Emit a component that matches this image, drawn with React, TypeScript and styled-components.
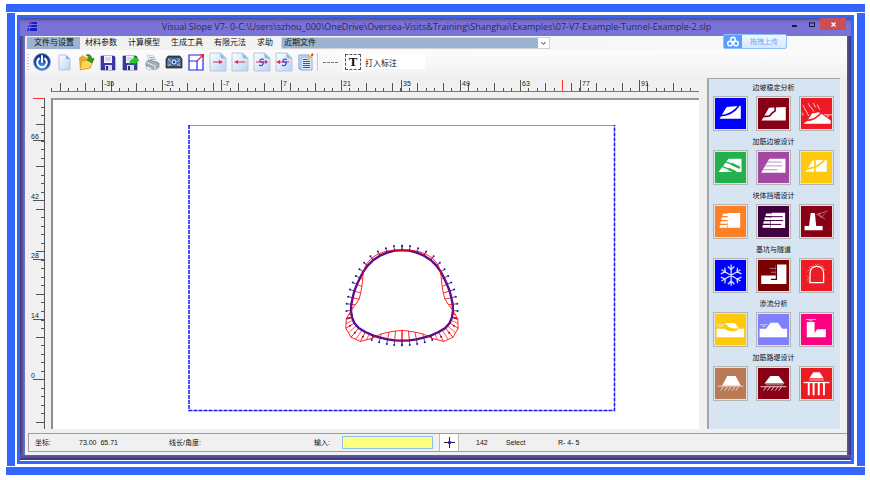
import React from "react";
import styled, { createGlobalStyle } from "styled-components";

const GlobalStyle = createGlobalStyle`
  * { box-sizing: border-box; }
  body { margin: 0; background: #fff; }
  button, input, select { font: inherit; margin: 0; padding: 0; border: 0; border-radius: 0; background: none; color: inherit; }
  svg { display: block; }
`;

const BLUE = "#3366ff";

const Page = styled.div`
  min-height: 100vh;
  display: flex;
  flex-direction: column;
  padding: 4px 5px 5px 6px;
  font-family: "Liberation Sans", "Noto Sans CJK SC", sans-serif;
  font-size: 8px;
  line-height: 12px;
  color: #111;
`;

const FrameBar = styled.div`
  height: 8px;
  background: ${BLUE};
`;

const FrameMiddle = styled.div`
  flex: 1;
  display: flex;
  margin: 1px 0 1px 1px;
  padding: 2px 3px 2px 2px;
  border: solid ${BLUE};
  border-width: 0 8px;
`;

const InnerFrame = styled.div`
  flex: 1;
  min-width: 0;
  display: flex;
  border: 3px solid ${BLUE};
  padding-bottom: 1px;
`;

const AppWindow = styled.main`
  position: relative;
  flex: 1;
  min-width: 0;
  display: flex;
  flex-direction: column;
  padding: 0 4px 5px 5px;
  background:
    linear-gradient(to top, #38356f, #625cb4) bottom / 100% 5px no-repeat,
    linear-gradient(to right, #3b3878, #7a74cc) left / 5px 100% no-repeat,
    linear-gradient(to left, #38356f, #625cb4) right / 5px 100% no-repeat;
`;

const TitleBar = styled.header`
  display: grid;
  grid-template-columns: 1fr auto 1fr;
  align-items: center;
  height: 18px;
  margin: 0 -4px 0 -5px;
  padding: 0 5px 0 7px;
  background: linear-gradient(to bottom, #4b4690, #7069c8 3px, #7a74d8 6px, #7973d6);
`;

const Title = styled.h1`
  margin: 0;
  font: 400 9px/16px "Open Sans", "Noto Sans", sans-serif;
  white-space: nowrap;
  color: #2c2a58;
`;

const WindowControls = styled.div`
  display: flex;
  align-self: start;
  justify-self: end;
`;

const WindowButton = styled.button<{ $close?: boolean }>`
  display: grid;
  place-items: center;
  width: ${(p) => (p.$close ? "26px" : "17px")};
  height: 12px;
  background: ${(p) => (p.$close ? "#c94f55" : "transparent")};
`;

const Client = styled.div`
  flex: 1;
  display: flex;
  flex-direction: column;
  padding-bottom: 3px;
  background: #f0f0f0;
`;

const MenuBar = styled.nav`
  display: flex;
  height: 14px;
  padding: 1px 0 1px 2px;
  background: linear-gradient(to right, #f0f0f0, #fafafa);
`;

const MenuItem = styled.button<{ $active?: boolean }>`
  height: 12px;
  padding: ${(p) => (p.$active ? "0 6px 0 7px" : "0 6px 0 5px")};
  background: ${(p) => (p.$active ? "#9ab3d0" : "transparent")};
  white-space: nowrap;
`;

const Combo = styled.label`
  position: relative;
  width: 269px;
  margin-left: 2px;
  border: 1px solid #d2d2d8;
  background: #fff;
`;

const ComboSelect = styled.select`
  appearance: none;
  display: block;
  width: 256px;
  height: 10px;
  padding: 0 2px;
  background: #9ab3d0;
  line-height: 10px;
`;

const ComboArrow = styled.svg`
  position: absolute;
  right: 3px;
  top: 3px;
  pointer-events: none;
`;

const Toolbar = styled.div`
  display: flex;
  align-items: center;
  height: 26px;
  padding: 0 0 2px 2px;
  background: linear-gradient(to bottom, #fcfcfc, #f2f2f2);
`;

const Grip = styled.span`
  width: 2px;
  height: 16px;
  margin-right: 2px;
  background: repeating-linear-gradient(to bottom, #c4c4c4 0 1px, transparent 1px 3px);
`;

const ToolButton = styled.button`
  display: grid;
  place-items: center;
  width: 22px;
  height: 22px;
`;

const Divider = styled.span`
  width: 1px;
  height: 18px;
  background: #c8c8cc;
`;

const DashButton = styled.button`
  width: 16px;
  height: 20px;
  margin: 0 4px 0 5px;
  background: repeating-linear-gradient(to right, #777 0 3px, transparent 3px 4px) center / 100% 1px no-repeat;
`;

const TextTool = styled.button`
  display: grid;
  place-items: center;
  width: 20px;
  height: 20px;
  background: #fff;
  font: 700 13px/14px "Liberation Serif", serif;

  span { width: 16px; height: 16px; border: 1px dashed #555; }
`;

const NoteInput = styled.input`
  width: 62px;
  height: 14px;
  padding-left: 2px;
  background: #fff;
  font-size: 8px;
`;

const Workspace = styled.div`
  flex: 1;
  display: flex;
  padding: 2px 7px 4px 0;
`;

const Drawing = styled.section`
  flex: 1;
  min-width: 0;
  display: grid;
  grid-template: 20px 1fr / 26px 1fr;
  margin-right: 8px;
`;

const Ruler = styled.svg`
  width: 100%;
  height: 100%;
  overflow: hidden;
  font: 7px "Liberation Sans", sans-serif;
  shape-rendering: crispEdges;
`;

const Corner = styled.div``;

const Canvas = styled.div`
  min-height: 0;
  border: solid #8e8e8e;
  border-width: 2px 0 0 2px;
  border-top-color: #9a9a9a;
  background: #fff;

  svg { width: 100%; height: 100%; }
`;

const Palette = styled.aside`
  width: 133px;
  border: solid #a3a6ab;
  border-width: 1px 0 0 2px;
  background: #d7e4f2;
`;

const Group = styled.section`
  display: grid;
  grid-template-columns: repeat(3, 35px);
  justify-content: space-between;
  padding: 0 6px 2px 4px;
`;

const GroupTitle = styled.h2`
  grid-column: 1 / -1;
  margin: 0;
  font-size: 7px;
  font-weight: 400;
  line-height: 17px;
  text-align: center;
`;

const PaletteButton = styled.button<{ $color: string }>`
  width: 35px;
  height: 35px;
  border: 1px solid #b4b4b4;
  padding: 1px;
  background: #e6e3e3;

  svg { width: 31px; height: 31px; background: ${(p) => p.$color}; }
`;

const StatusBar = styled.footer`
  display: grid;
  grid-template-columns: 44px 90px 145px 28px 91px 6px 20px 17px 30px 52px 1fr;
  align-items: center;
  height: 19px;
  margin-left: 3px;
  padding-left: 6px;
  border: 1px solid #9c9c9c;
  border-right: 0;
  font-size: 7px;
  white-space: nowrap;
`;

const CommandInput = styled.input`
  height: 13px;
  padding: 0 2px;
  border: 1px solid #8fc0ea;
  background: #ffff80;
  outline: none;
`;

const CrossButton = styled.button`
  grid-column: 7;
  display: grid;
  place-items: center;
  height: 17px;
  border: solid #bbb;
  border-width: 0 1px;
  background: #fff;
`;

const StatusCell = styled.span<{ $column?: number }>`
  grid-column: ${(p) => p.$column ?? "auto"};
`;

const Upload = styled.button`
  position: absolute;
  top: 16px;
  right: 64px;
  display: flex;
  align-items: center;
  width: 64px;
  height: 15px;
  border: 1px solid #8fbcff;
  border-radius: 2px;
  overflow: hidden;
  background: linear-gradient(to bottom, #f0f7ff, #d5e8ff);
  color: #74a8f8;
  font-size: 7px;

  svg { background: #5a9cff; }
  span { flex: 1; }
`;

const PageShape = () => (
  <>
    <path d="M2 1h11l5 5v13H2z" fill="url(#paper)" stroke="#b4c8e2" />
    <path d="M12 1l1 5 5 1z" fill="#8fb2dc" />
  </>
);

const Defs = () => (
  <defs>
    <linearGradient id="paper" x1="0" y1="0" x2="1" y2="1">
      <stop offset="0" stopColor="#fff" />
      <stop offset="1" stopColor="#b9d2f0" />
    </linearGradient>
    <radialGradient id="orb" cx=".5" cy=".8" r=".8">
      <stop offset="0" stopColor="#54a6ee" />
      <stop offset=".5" stopColor="#1b4fae" />
      <stop offset="1" stopColor="#0c2a74" />
    </radialGradient>
  </defs>
);

const Floppy = () => (
  <>
    <path d="M3 4h13l1 1v13H3z" fill="#3c3aa8" stroke="#2a2880" strokeWidth=".6" />
    <path d="M6 4h8v7H6z" fill="#f4f4ff" />
    <path d="M7 6h6M7 8h6" stroke="#b8b8d8" />
    <path d="M7 13h7v5H7z" fill="#dcdcec" />
    <path d="M8 14h2v4H8z" fill="#2a2880" />
  </>
);

const toolIcons: { name: string; art: React.ReactNode }[] = [
  {
    name: "电源",
    art: (
      <>
        <circle cx="10" cy="10" r="8.4" fill="url(#orb)" stroke="#6f8fc0" strokeWidth=".8" />
        <path d="M7 6.600a4.800 4.800 0 1 0 6 0M10 4v6" fill="none" stroke="#fff" strokeWidth="2" strokeLinecap="round" />
      </>
    ),
  },
  {
    name: "新建",
    art: (
      <>
        <path d="M5 3h7l4 4v11H5z" fill="url(#paper)" stroke="#b4c8e2" />
        <path d="M12 3v4h4z" fill="#86aee0" />
      </>
    ),
  },
  {
    name: "打开",
    art: (
      <>
        <path d="M3 6l4-3 2 2 7 1-1 10-11 2z" fill="#e9a92a" />
        <path d="M4 18l2-9 12-2-4 9z" fill="#ffd65c" stroke="#cf9420" strokeWidth=".7" />
        <path d="M10 3q5-2 6 4l2-1-2 5-5-3 2-1q0-3-3-4z" fill="#1fa51f" stroke="#12650f" strokeWidth=".5" />
      </>
    ),
  },
  { name: "保存", art: <Floppy /> },
  {
    name: "另存",
    art: (
      <>
        <Floppy />
        <path d="M9 13q1-6 5-6V4l5 4-5 5v-3q-3 0-5 3z" fill="#16d216" stroke="#0aa00a" strokeWidth=".5" />
      </>
    ),
  },
  {
    name: "打印",
    art: (
      <>
        <path d="M5 3l7 1 3 6-8-1z" fill="#fff" stroke="#bbb" strokeWidth=".7" />
        <path d="M7 5l5 1M8 7l5 1" stroke="#5b87c8" strokeWidth=".8" />
        <path d="M4 10l3-2 10 3v4l-4 3-9-4z" fill="#a4adbb" stroke="#68727f" strokeWidth=".6" />
        <path d="M4 10l9 4v4" fill="none" stroke="#e8edf4" />
        <path d="M5 14l6 3-3 1-4-2z" fill="#fff" stroke="#888" strokeWidth=".5" />
      </>
    ),
  },
  {
    name: "快照",
    art: (
      <>
        <path d="M4 4h12l2 3v9H2V7z" fill="#3e4650" stroke="#222" strokeWidth=".7" />
        <path d="M4 6h12l1 8H3z" fill="#5680b6" />
        <circle cx="10" cy="10" r="3.300" fill="#b8d4f0" stroke="#26466f" />
        <circle cx="10" cy="10" r="1.200" fill="#26466f" />
        <path d="M4 7l3 3M16 7l-3 3M4 14l3-2M16 14l-3-2" stroke="#d7e7f6" strokeWidth=".7" />
      </>
    ),
  },
  {
    name: "缩放",
    art: (
      <>
        <path d="M3 3h14v15H3zM3 9h8v9" fill="#fff" stroke="#2424e8" strokeWidth="1.200" />
        <path d="M11 9l5-5" stroke="#f02020" strokeWidth="1.200" />
        <path d="M14 2h4v4z" fill="#f02020" />
      </>
    ),
  },
  {
    name: "右移",
    art: (
      <>
        <PageShape />
        <path d="M5 10h8" stroke="#ec2448" />
        <path d="M11 8l4 2-4 2z" fill="#ec2448" />
      </>
    ),
  },
  {
    name: "左移",
    art: (
      <>
        <PageShape />
        <path d="M7 10h8" stroke="#ec2448" />
        <path d="M8 8l-4 2 4 2z" fill="#ec2448" />
      </>
    ),
  },
  {
    name: "步进",
    art: (
      <>
        <PageShape />
        <path d="M4 10h11" stroke="#ec2448" />
        <path d="M13 8l3 2-3 2z" fill="#ec2448" />
        <path d="M12 7.500q-4-1-4 1t2 1.500 1 2-4 1" fill="none" stroke="#3838e0" strokeWidth="1.200" />
      </>
    ),
  },
  {
    name: "步退",
    art: (
      <>
        <PageShape />
        <path d="M4 10h11" stroke="#ec2448" />
        <path d="M6 8l-4 2 4 2z" fill="#ec2448" />
        <path d="M13 7.500q-4-1-4 1t2 1.500 1 2-4 1" fill="none" stroke="#3838e0" strokeWidth="1.200" />
      </>
    ),
  },
  {
    name: "记录",
    art: (
      <>
        <path d="M3 3h10v14H3z" fill="#e4ecff" stroke="#7c98e0" />
        <path d="M5 5h11v13H5z" fill="#dce8ff" stroke="#8aa8e4" />
        <path d="M7 7.500h6M7 9.500h7M7 11.500h7M7 13.500h7M7 15.500h7" stroke="#3050e0" />
        <path d="M12 8l4-5" stroke="#e8c820" strokeWidth="2" />
        <path d="M15.500 3.500l1.500-1.500" stroke="#ee2222" strokeWidth="2" />
      </>
    ),
  },
];

const W = "#fff";
const hatch = (color: string) => (
  <path d="M26 58l-9 12M38 58l-9 12M50 58l-9 12M62 58l-9 12M73 58l-9 12" stroke={color} strokeWidth="3" />
);

const groups: { title: string; items: { color: string; art: React.ReactNode }[] }[] = [
  {
    title: "边坡稳定分析",
    items: [
      {
        color: "#0000ff",
        art: (
          <>
            <path d="M14 64L36 28 80 24V64z" fill={W} />
            <path d="M16 55Q52 54 74 24" fill="none" stroke="#00f" strokeWidth="5" />
          </>
        ),
      },
      {
        color: "#880015",
        art: (
          <>
            <path d="M11 70L34 30 86 28V70z" fill={W} />
            <path d="M9 58L34 56Q40 54 42 48L53 40V26" fill="none" stroke="#880015" strokeWidth="5" />
          </>
        ),
      },
      {
        color: "#ed1c24",
        art: (
          <>
            <path d="M8 80L20 70 34 48 56 44 92 70V80z" fill={W} />
            <path d="M12 69Q42 72 64 44" fill="none" stroke="#ed1c24" strokeWidth="5" />
            <path d="M6 22l9 18M15 38l9 18M22 16l7 13M31 28l9 14M38 16l7 13M50 20l8 16M3 45l4 9" stroke="#ffc2c2" strokeWidth="3" />
            <path d="M70 52H96" stroke="#ffc2c2" strokeWidth="3" />
            <path d="M78 54h10l-5 6z" fill="#ffc2c2" />
          </>
        ),
      },
    ],
  },
  {
    title: "加筋边坡设计",
    items: [
      {
        color: "#22b14c",
        art: (
          <>
            <path d="M11 62L42 21H82V62z" fill={W} />
            <path d="M31 30L50 37M23 45L43 53" stroke="#22b14c" strokeWidth="4" />
            <path d="M50 36L77 49M42 52L65 63" stroke="#22b14c" strokeWidth="8" />
          </>
        ),
      },
      {
        color: "#a349a4",
        art: (
          <>
            <path d="M10 64L35 21H85V64z" fill={W} />
            <path d="M28 31H73M24 43H76M17 55H60" stroke="#c289c3" strokeWidth="3" />
          </>
        ),
      },
      {
        color: "#ffc90e",
        art: (
          <>
            <path d="M14 61L36 26 80 23V61z" fill={W} />
            <path d="M14 53Q54 52 78 18M43 20V64" fill="none" stroke="#ffc90e" strokeWidth="5" />
          </>
        ),
      },
    ],
  },
  {
    title: "块体挡墙设计",
    items: [
      {
        color: "#ff7f27",
        art: (
          <path d="M39 22H78V67H39zM25 23H42V31H23zM21 35H40V43H20zM18 47H38V55H16zM15 59H37V67H14z" fill={W} />
        ),
      },
      {
        color: "#3f0040",
        art: (
          <>
            <path d="M25 23H42V31H23zM21 35H40V43H20zM18 47H38V55H16zM15 59H37V67H14z" fill={W} />
            <path d="M42 21H84V68H38z" fill={W} />
            <path d="M28 33H76M26 45H78M22 57H72" stroke="#3f0040" strokeWidth="3" />
          </>
        ),
      },
      {
        color: "#880015",
        art: (
          <>
            <path d="M30 22H43L47 62H67V75H11V62H25z" fill={W} />
            <path d="M47 27L82 16M56 20l4 14M62 36l12-12M50 26l24 14" fill="none" stroke="#dba3a8" strokeWidth="2" />
          </>
        ),
      },
    ],
  },
  {
    title: "基坑与隧道",
    items: [
      {
        color: "#0000ff",
        art: (
          <path
            d="M50 14V80M20 30L79 65M79 30L20 65M40 20l10 10 10-10M40 75l10-10 10 10M18 43l14-6-2-13M82 43l-14-6 2-13M18 53l14 6-2 13M82 53l-14 6 2 13"
            fill="none"
            stroke="#d8e2ff"
            strokeWidth="4"
          />
        ),
      },
      {
        color: "#7b0000",
        art: (
          <>
            <path d="M10 48H55V14H88V74H10z" fill={W} />
            <path d="M57 12V60H40" fill="none" stroke="#4a0018" strokeWidth="4" />
            <path d="M36 26H56M40 38H56" stroke="#b07080" strokeWidth="3" />
          </>
        ),
      },
      {
        color: "#ed1c24",
        art: (
          <>
            <path d="M28 70V42Q29 20 49 20T70 42V70z" fill="none" stroke={W} strokeWidth="4" />
            <path d="M20 36l8-8-2-6 12-4M42 12l6 4 8-4M60 16l8 4 2 8 6 2M18 48l6 6-4 8 5 6" fill="none" stroke="#ff9c9c" strokeWidth="2" />
          </>
        ),
      },
    ],
  },
  {
    title: "渗流分析",
    items: [
      {
        color: "#ffc90e",
        art: (
          <>
            <path d="M5 46H30Q44 58 68 52L72 46H90V72H5z" fill={W} />
            <path d="M31 28H62L73 44Q52 48 40 38z" fill={W} />
            <path d="M5 33H32M10 38H26" stroke="#ffe795" strokeWidth="3" />
          </>
        ),
      },
      {
        color: "#8080ff",
        art: (
          <>
            <path d="M5 46H25L39 27H62L75 46H90V72H5z" fill={W} />
            <path d="M6 33H30M12 38H24" stroke="#c6c6ff" strokeWidth="3" />
          </>
        ),
      },
      {
        color: "#ff0080",
        art: (
          <>
            <path d="M18 25H42V59L50 47H77V72H18z" fill={W} />
            <path d="M15 17H46M24 21H36" stroke="#ffb0d8" strokeWidth="3" />
          </>
        ),
      },
    ],
  },
  {
    title: "加筋路堤设计",
    items: [
      {
        color: "#b97a57",
        art: (
          <>
            <path d="M22 55L38 25H64L80 55z" fill={W} />
            <path d="M8 56H88" stroke="#f0ddd0" strokeWidth="3" />
            {hatch("#f0ddd0")}
          </>
        ),
      },
      {
        color: "#880015",
        art: (
          <>
            <path d="M20 48L38 25H64L82 48z" fill={W} />
            <path d="M24 52H78" stroke="#c88890" strokeWidth="3" />
            <path d="M8 58H88" stroke="#ecd0d4" strokeWidth="3" />
            {hatch("#ecd0d4")}
          </>
        ),
      },
      {
        color: "#ed1c24",
        art: (
          <>
            <path d="M26 32L38 13H58L70 32z" fill={W} />
            <path d="M25 37H71" stroke="#ff9a9a" strokeWidth="4" />
            <path d="M8 45H88" stroke={W} strokeWidth="4" />
            <path d="M24 46V84M39 46V84M55 46V84M71 46V84" stroke={W} strokeWidth="6" />
          </>
        ),
      },
    ],
  },
];

const range = (n: number) => Array.from({ length: n }, (_, i) => i);

function TopRuler() {
  return (
    <Ruler aria-label="水平标尺">
      <path d="M0 13.500H648" stroke="#777" />
      {range(77).map((i) => {
        const x = Math.round(i * 8.52);
        return <rect key={i} x={x} y={i % 3 === 1 ? 5 : 10} width="1" height={i % 3 === 1 ? 8 : 3} fill="#555" />;
      })}
      {range(10).map((i) => {
        const x = Math.round(51 + i * 59.7);
        return (
          <g key={i}>
            <rect x={x} y="2" width="1" height="11" fill="#555" />
            <text x={x + 2} y="8" fill="#222">{-35 + i * 14}</text>
          </g>
        );
      })}
      <rect x="511" y="2" width="1" height="11" fill="#f33" />
    </Ruler>
  );
}

const heights = [66, 42, 28, 14, 0];

function LeftRuler() {
  return (
    <Ruler aria-label="垂直标尺">
      <path d="M19.500 0V332" stroke="#555" />
      {range(39).map((i) => {
        const long = i % 5 === 3;
        return (
          <rect key={i} x={long ? 11 : 16} y={Math.round(i * 8.52)} width={long ? 8 : 3} height="1" fill="#555" />
        );
      })}
      {heights.map((value, i) => {
        const y = Math.round(42 + i * 59.7);
        return (
          <g key={value}>
            <rect x="8" y={y} width="11" height="1" fill="#555" />
            <text x="6" y={y - 1} fill="#222">{value}</text>
          </g>
        );
      })}
      <rect x="8" y="0" width="11" height="1" fill="#f33" />
    </Ruler>
  );
}

type Pt = [number, number];

/* Left half of the lining, crown to invert, in thirds of a pixel from the axis. */
const half: Pt[] = [
  [0, 46], [-22, 47], [-44, 53], [-66, 62], [-86, 75], [-103, 92], [-116, 110],
  [-126, 129], [-135, 148], [-143, 168], [-148, 188], [-152, 208], [-153, 227],
  [-150, 247], [-143, 264], [-130, 279], [-110, 291], [-86, 302], [-65, 308],
  [-43, 313], [-22, 316], [0, 317],
];

/* Signed distance of the pressure curve from the lining, outward positive. */
const pressure = [0, 2, 5, 7, 8, 6, 0, -9, -16, -20, -20, -12, 0, 18, 30, 36, 32, 8, -12, -22, -28, -31];

const normals: Pt[] = half.map((_, i) => {
  if (i === 0) return [0, -1];
  if (i === half.length - 1) return [0, 1];
  const dx = half[i + 1][0] - half[i - 1][0];
  const dy = half[i + 1][1] - half[i - 1][1];
  const len = Math.hypot(dx, dy);
  return [-dy / len, dx / len];
});

const offset = (i: number, d: number): Pt => [half[i][0] + normals[i][0] * d, half[i][1] + normals[i][1] * d];
const middle = (a: Pt, b: Pt): Pt => [(a[0] + b[0]) / 2, (a[1] + b[1]) / 2];
const toPath = (pts: Pt[]) => "M" + pts.map((p) => p.map((v) => v.toFixed(1)).join(" ")).join("L");
const pressurePts = pressure.map((d, i) => offset(i, d));
const lobeSpokes = [12, 13, 14, 15, 16].map((i) =>
  toPath([middle(half[i], half[i + 1]), middle(pressurePts[i], pressurePts[i + 1])])
);

function LiningHalf() {
  return (
    <>
      {half.map((p, i) => {
        const outer = offset(i, 14);
        const lobe = i >= 14 && i <= 16;
        const mid = middle(p, pressurePts[i]);
        return (
          <g key={i}>
            {!lobe && <path d={toPath([p, outer])} stroke="#333" strokeWidth="2.500" />}
            {!lobe && <circle cx={outer[0]} cy={outer[1]} r="3" fill="#1818b8" />}
            <path d={toPath([p, pressurePts[i]])} stroke="#f00" strokeWidth="2.500" />
            {pressure[i] > 15 && <circle cx={mid[0]} cy={mid[1]} r="3" fill="#b00020" />}
          </g>
        );
      })}
      <path d={lobeSpokes.join("")} stroke="#f00" strokeWidth="2" />
      <path d={toPath(half)} fill="none" stroke="#3a0aa8" strokeWidth="7" strokeLinejoin="round" />
      <path d={toPath(half)} fill="none" stroke="#c00040" strokeWidth="2" />
      <path d={toPath(pressurePts)} fill="none" stroke="#f00" strokeWidth="2.500" strokeLinejoin="round" />
    </>
  );
}

function Model() {
  return (
    <svg viewBox="0 0 646 329" role="img" aria-label="隧道模型">
      <path d="M135 25H562" stroke="#999" strokeWidth="1" shapeRendering="crispEdges" />
      <path d="M136 25V310.500H561.500V25" fill="none" stroke="#1414ff" strokeWidth="1.500" strokeDasharray="4 1" />
      <g transform="translate(349 135) scale(.3333)">
        <LiningHalf />
        <g transform="scale(-1 1)">
          <LiningHalf />
        </g>
      </g>
    </svg>
  );
}

export default function App() {
  return (
    <Page>
      <GlobalStyle />
      <FrameBar />
      <FrameMiddle>
        <InnerFrame>
          <AppWindow>
            <TitleBar>
              <svg width="11" height="10" viewBox="0 0 11 10" aria-hidden="true">
                <path d="M3 0H10V2H2zM2 3H10V5H1zM1 6H10V9H0z" fill="#1c1cc4" />
                <path d="M4 0L2 9" stroke="#7973d6" />
              </svg>
              <Title>
                Visual Slope V7- 0-C:\Users\szhou_000\OneDrive\Oversea-Visits&amp;Training\Shanghai\Examples\07-V7-Example-Tunnel-Example-2.slp
              </Title>
              <WindowControls>
                <WindowButton aria-label="最小化">
                  <svg width="5" height="6"><path d="M0 5H5" stroke="#1c1a38" strokeWidth="2" /></svg>
                </WindowButton>
                <WindowButton aria-label="最大化">
                  <svg width="6" height="5"><path d="M0 1H6M.5 0V5M5.500 0V5M0 4.500H6" stroke="#1c1a38" /></svg>
                </WindowButton>
                <WindowButton $close aria-label="关闭">
                  <svg width="5" height="5"><path d="M.5 .5L4.500 4.500M4.500 .5L.5 4.500" stroke="#fff" strokeWidth="1.300" /></svg>
                </WindowButton>
              </WindowControls>
            </TitleBar>
            <Client>
              <MenuBar>
                <MenuItem $active>文件与设置</MenuItem>
                <MenuItem>材料参数</MenuItem>
                <MenuItem>计算模型</MenuItem>
                <MenuItem>生成工具</MenuItem>
                <MenuItem>有限元法</MenuItem>
                <MenuItem>求助</MenuItem>
                <Combo>
                  <ComboSelect aria-label="近期文件"><option>近期文件</option></ComboSelect>
                  <ComboArrow width="5" height="5"><path d="M.5 1L2.500 3.500 4.500 1" fill="none" stroke="#444" /></ComboArrow>
                </Combo>
              </MenuBar>
              <Toolbar>
                <Grip />
                {toolIcons.map((t) => (
                  <ToolButton key={t.name} aria-label={t.name}>
                    <svg width="20" height="20" viewBox="0 0 20 20"><Defs />{t.art}</svg>
                  </ToolButton>
                ))}
                <Divider />
                <DashButton aria-label="线型" />
                <TextTool><span>T</span></TextTool>
                <NoteInput aria-label="标注" defaultValue="打入标注" />
              </Toolbar>
              <Workspace>
                <Drawing>
                  <Corner />
                  <TopRuler />
                  <LeftRuler />
                  <Canvas><Model /></Canvas>
                </Drawing>
                <Palette>
                  {groups.map((g) => (
                    <Group key={g.title}>
                      <GroupTitle>{g.title}</GroupTitle>
                      {g.items.map((item, i) => (
                        <PaletteButton key={i} $color={item.color} aria-label={`${g.title} ${i + 1}`}>
                          <svg viewBox="0 0 96 96">{item.art}</svg>
                        </PaletteButton>
                      ))}
                    </Group>
                  ))}
                </Palette>
              </Workspace>
              <StatusBar>
                <StatusCell>坐标:</StatusCell>
                <StatusCell>73.00&nbsp; 65.71</StatusCell>
                <StatusCell>线长/角度:</StatusCell>
                <label htmlFor="command">输入:</label>
                <CommandInput id="command" autoFocus />
                <CrossButton aria-label="捕捉">
                  <svg width="13" height="13">
                    <path d="M6.500 1V12M1 6.500H12" stroke="#222" />
                    <circle cx="6.500" cy="6.500" r="1.800" fill="#2424d8" />
                  </svg>
                </CrossButton>
                <StatusCell $column={9}>142</StatusCell>
                <StatusCell>Select</StatusCell>
                <StatusCell>R- 4- 5</StatusCell>
              </StatusBar>
            </Client>
            <Upload>
              <svg width="18" height="13" viewBox="0 0 18 13" aria-hidden="true">
                <g fill="none" stroke="#fff" strokeWidth="1.500">
                  <circle cx="9" cy="4.500" r="2.300" />
                  <circle cx="6" cy="8.500" r="2.300" />
                  <circle cx="12" cy="8.500" r="2.300" />
                </g>
              </svg>
              <span>拖拽上传</span>
            </Upload>
          </AppWindow>
        </InnerFrame>
      </FrameMiddle>
      <FrameBar />
    </Page>
  );
}
